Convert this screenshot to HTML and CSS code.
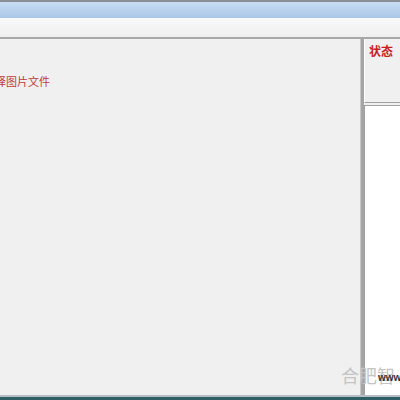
FILE: index.html
```html
<!DOCTYPE html>
<html lang="zh-CN">
<head>
    <meta charset="UTF-8">
    <title>图片文件</title>
    <link rel="stylesheet" href="styles.css">
</head>
<body>
    <div class="window">
        <div class="titlebar"></div>
        <div class="toolbar"></div>
        <div class="main">
            <div class="left">
                <div class="file-label">择图片文件</div>
            </div>
            <div class="splitter"></div>
            <div class="right">
                <div class="status">状态</div>
                <div class="output"></div>
            </div>
        </div>
        <div class="statusbar"></div>
        <div class="watermark">合肥智<span class="www">www</span></div>
    </div>
</body>
</html>
```

FILE: styles.css
```css
body {
    margin: 0;
    font-family: "Noto Sans CJK SC", "Liberation Sans", sans-serif;
    overflow: hidden;
}
.window {
    position: relative;
    width: 400px;
    height: 400px;
    display: flex;
    flex-direction: column;
    background-color: #f0f0f0;
}
.titlebar {
    height: 16px;
    border-top: 2px solid #8a8f96;
    background: linear-gradient(#c9dcf2, #a9c6e8);
}
.toolbar {
    height: 19px;
    background: linear-gradient(#f8f9fb, #efefef);
    border-bottom: 2px solid #a8a8a8;
}
.main {
    flex: 1;
    display: flex;
}
.left {
    flex: 1;
    background-color: #f0f0f0;
    padding-top: 35px;
    overflow: hidden;
}
.file-label {
    margin-left: -5px;
    font-size: 11px;
    line-height: 14px;
    color: #c03a3a;
}
.splitter {
    width: 3px;
    background-color: #a5a5a5;
    border-left: 1px solid #c8c8c8;
}
.right {
    width: 36px;
    display: flex;
    flex-direction: column;
}
.status {
    height: 64px;
    padding: 3px 0 0 4px;
    box-sizing: border-box;
    font-size: 12px;
    font-weight: bold;
    color: #c81e1e;
    background-color: #f0f0f0;
    border-left: 1px solid #ffffff;
    border-bottom: 1px solid #a0a0a0;
}
.output {
    flex: 1;
    background-color: #ffffff;
    border-top: 1px solid #a0a0a0;
    border-left: 1px solid #a0a0a0;
    margin-top: 2px;
}
.statusbar {
    height: 3px;
    border-top: 2px solid #b8bcc4;
    background-color: #2e5f63;
}
.watermark {
    position: absolute;
    left: 341px;
    top: 362px;
    font-size: 18px;
    color: #c4c4c4;
    white-space: nowrap;
}
.www {
    position: absolute;
    left: 37px;
    top: 10px;
    font-family: "Liberation Sans", sans-serif;
    font-size: 10px;
    font-weight: bold;
    color: #333333;
}
```
